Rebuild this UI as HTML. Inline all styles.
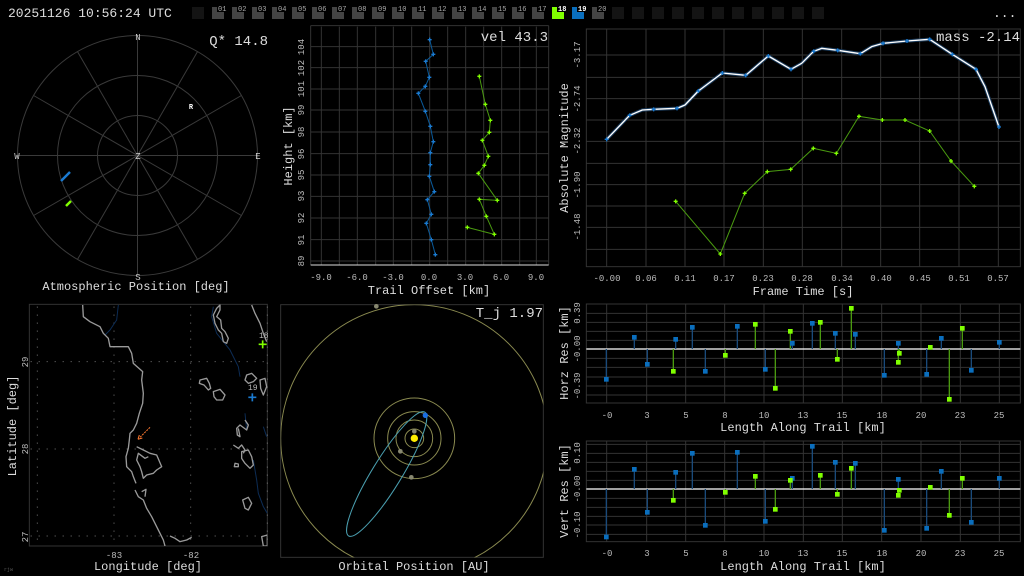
<!DOCTYPE html>
<html><head><meta charset="utf-8"><style>
html,body{margin:0;padding:0;background:#000;width:1024px;height:576px;overflow:hidden}
svg{display:block}
text{font-family:"Liberation Mono",monospace}
</style></head><body>
<svg width="1024" height="576" viewBox="0 0 1024 576" xmlns="http://www.w3.org/2000/svg">
<defs>
<path id="pb" d="M-6 0h12M0-6v12" stroke="#1a7ad0" stroke-width="4"/>
<path id="pg" d="M-6 0h12M0-6v12" stroke="#80ff00" stroke-width="4"/>
<clipPath id="oc"><rect x="2" y="14" width="788" height="758"/></clipPath>
<clipPath id="mc"><rect x="88" y="13" width="714" height="725"/></clipPath>
</defs>
<rect width="1024" height="576" fill="#000"/>
<!-- header -->
<text x="8" y="17" font-size="13" fill="#ddd">20251126 10:56:24 UTC</text>
<g>
<rect x="192" y="7" width="12" height="12" fill="#141414"/>
<g fill="#444"><rect x="212" y="7" width="12" height="12"/><rect x="232" y="7" width="12" height="12"/><rect x="252" y="7" width="12" height="12"/><rect x="272" y="7" width="12" height="12"/><rect x="292" y="7" width="12" height="12"/><rect x="312" y="7" width="12" height="12"/><rect x="332" y="7" width="12" height="12"/><rect x="352" y="7" width="12" height="12"/><rect x="372" y="7" width="12" height="12"/><rect x="392" y="7" width="12" height="12"/><rect x="412" y="7" width="12" height="12"/><rect x="432" y="7" width="12" height="12"/><rect x="452" y="7" width="12" height="12"/><rect x="472" y="7" width="12" height="12"/><rect x="492" y="7" width="12" height="12"/><rect x="512" y="7" width="12" height="12"/><rect x="532" y="7" width="12" height="12"/><rect x="592" y="7" width="12" height="12"/></g>
<rect x="552" y="7" width="12" height="12" fill="#80ff00"/>
<rect x="572" y="7" width="12" height="12" fill="#0a6ebd"/>
<g fill="#141414"><rect x="612" y="7" width="12" height="12"/><rect x="632" y="7" width="12" height="12"/><rect x="652" y="7" width="12" height="12"/><rect x="672" y="7" width="12" height="12"/><rect x="692" y="7" width="12" height="12"/><rect x="712" y="7" width="12" height="12"/><rect x="732" y="7" width="12" height="12"/><rect x="752" y="7" width="12" height="12"/><rect x="772" y="7" width="12" height="12"/><rect x="792" y="7" width="12" height="12"/><rect x="812" y="7" width="12" height="12"/></g>
<g fill="#000"><rect x="217" y="4" width="10" height="8"/><rect x="237" y="4" width="10" height="8"/><rect x="257" y="4" width="10" height="8"/><rect x="277" y="4" width="10" height="8"/><rect x="297" y="4" width="10" height="8"/><rect x="317" y="4" width="10" height="8"/><rect x="337" y="4" width="10" height="8"/><rect x="357" y="4" width="10" height="8"/><rect x="377" y="4" width="10" height="8"/><rect x="397" y="4" width="10" height="8"/><rect x="417" y="4" width="10" height="8"/><rect x="437" y="4" width="10" height="8"/><rect x="457" y="4" width="10" height="8"/><rect x="477" y="4" width="10" height="8"/><rect x="497" y="4" width="10" height="8"/><rect x="517" y="4" width="10" height="8"/><rect x="537" y="4" width="10" height="8"/><rect x="557" y="4" width="10" height="8"/><rect x="577" y="4" width="10" height="8"/><rect x="597" y="4" width="10" height="8"/></g>
<g font-size="7" fill="#aaa"><text x="218" y="11">01</text><text x="238" y="11">02</text><text x="258" y="11">03</text><text x="278" y="11">04</text><text x="298" y="11">05</text><text x="318" y="11">06</text><text x="338" y="11">07</text><text x="358" y="11">08</text><text x="378" y="11">09</text><text x="398" y="11">10</text><text x="418" y="11">11</text><text x="438" y="11">12</text><text x="458" y="11">13</text><text x="478" y="11">14</text><text x="498" y="11">15</text><text x="518" y="11">16</text><text x="538" y="11">17</text><text x="558" y="11" fill="#fff" font-weight="bold">18</text><text x="578" y="11" fill="#fff" font-weight="bold">19</text><text x="598" y="11">20</text></g>
<text x="993" y="17" font-size="13" fill="#ddd">...</text>
</g>

<!-- polar -->
<g stroke="#3a3a3a" stroke-width="1" fill="none">
<circle cx="137.5" cy="155.5" r="40"/><circle cx="137.5" cy="155.5" r="80"/><circle cx="137.5" cy="155.5" r="120"/>
<path d="M137.5 35.5V275.5M17.5 155.5H257.5M197.5 51.6L77.5 259.4M241.4 95.5L33.6 215.5M241.4 215.5L33.6 95.5M197.5 259.4L77.5 51.6"/>
</g>
<g font-size="9" fill="#ccc" text-anchor="middle"><text x="138" y="40">N</text><text x="138" y="280">S</text><text x="17" y="159">W</text><text x="258" y="159">E</text><text x="138" y="159">Z</text><text x="191" y="109" font-size="7" fill="#fff" font-weight="bold">R</text></g>
<path d="M61 181L70 172" stroke="#1a7ad0" stroke-width="2.5"/>
<path d="M66 206L71 201" stroke="#80ff00" stroke-width="2.5"/>
<text x="268" y="45" font-size="14" fill="#ddd" text-anchor="end">Q* 14.8</text>
<text x="136" y="290" font-size="12" fill="#ddd" text-anchor="middle">Atmospheric Position [deg]</text>

<!-- height plot (zoom coords) -->
<g transform="translate(280,20) scale(0.33333)">
<g stroke="#333" stroke-width="3">
<path d="M124 20V735M178 20V735M232 20V735M287 20V735M340 20V735M395 20V735M449 20V735M503 20V735M557 20V735M611 20V735M665 20V735M719 20V735M769 20V735"/>
<path d="M92 17H806M92 80H806M92 143H806M92 207H806M92 270H806M92 336H806M92 401H806M92 465H806M92 529H806M92 594H806M92 659H806M92 723H806"/>
<path d="M92 17V735M806 17V735"/>
</g>
<path d="M92 735H806" stroke="#ddd" stroke-width="3"/>
<polyline fill="none" stroke="#0a5a9a" stroke-width="3" points="449,59 460,103 437,124 448,172 436,199 415,220 436,274 451,319 460,365 451,398 451,434 448,469 463,515 442,539 454,583 439,610 454,659 466,704"/>
<g><use href="#pb" x="449" y="59"/><use href="#pb" x="460" y="103"/><use href="#pb" x="437" y="124"/><use href="#pb" x="448" y="172"/><use href="#pb" x="436" y="199"/><use href="#pb" x="415" y="220"/><use href="#pb" x="436" y="274"/><use href="#pb" x="451" y="319"/><use href="#pb" x="460" y="365"/><use href="#pb" x="451" y="398"/><use href="#pb" x="451" y="434"/><use href="#pb" x="448" y="469"/><use href="#pb" x="463" y="515"/><use href="#pb" x="442" y="539"/><use href="#pb" x="454" y="583"/><use href="#pb" x="439" y="610"/><use href="#pb" x="454" y="659"/><use href="#pb" x="466" y="704"/></g>
<polyline fill="none" stroke="#4a9a10" stroke-width="3" points="598,169 616,253 631,301 628,337 607,361 625,409 613,436 595,460 652,541 598,538 619,589 643,643 562,622"/>
<g><use href="#pg" x="598" y="169"/><use href="#pg" x="616" y="253"/><use href="#pg" x="631" y="301"/><use href="#pg" x="628" y="337"/><use href="#pg" x="607" y="361"/><use href="#pg" x="625" y="409"/><use href="#pg" x="613" y="436"/><use href="#pg" x="595" y="460"/><use href="#pg" x="652" y="541"/><use href="#pg" x="598" y="538"/><use href="#pg" x="619" y="589"/><use href="#pg" x="643" y="643"/><use href="#pg" x="562" y="622"/></g>
</g>
<g font-size="9" fill="#bbb" text-anchor="middle">
<text x="321" y="280">-9.0</text><text x="357" y="280">-6.0</text><text x="393" y="280">-3.0</text><text x="429" y="280">0.0</text><text x="465" y="280">3.0</text><text x="501" y="280">6.0</text><text x="536" y="280">9.0</text>
</g>
<g font-size="9" fill="#bbb" text-anchor="middle">
<text transform="translate(304,47) rotate(-90)">104</text><text transform="translate(304,68) rotate(-90)">102</text><text transform="translate(304,89) rotate(-90)">101</text><text transform="translate(304,110) rotate(-90)">99</text><text transform="translate(304,132) rotate(-90)">98</text><text transform="translate(304,154) rotate(-90)">96</text><text transform="translate(304,175) rotate(-90)">95</text><text transform="translate(304,196) rotate(-90)">93</text><text transform="translate(304,218) rotate(-90)">92</text><text transform="translate(304,240) rotate(-90)">91</text><text transform="translate(304,261) rotate(-90)">89</text>
</g>
<text x="429" y="294" font-size="12" fill="#ddd" text-anchor="middle">Trail Offset [km]</text>
<text transform="translate(292,146) rotate(-90)" font-size="12" fill="#ddd" text-anchor="middle">Height [km]</text>
<text x="548" y="41" font-size="14" fill="#ddd" text-anchor="end">vel 43.3</text>

<!-- magnitude -->
<g transform="translate(555,20) scale(0.33333)">
<g stroke="#333" stroke-width="3">
<path d="M155 27V740M273 27V740M390 27V740M507 27V740M625 27V740M742 27V740M860 27V740M977 27V740M1094 27V740M1212 27V740M1330 27V740"/>
<path d="M94 105H1396M94 172H1396M94 236H1396M94 300H1396M94 364H1396M94 430H1396M94 494H1396M94 558H1396M94 622H1396M94 688H1396"/>
<rect x="94" y="27" width="1302" height="713" fill="none"/>
</g>
<polyline fill="none" stroke="#1a3a5a" stroke-width="10" stroke-linejoin="round" points="155,358 224,286 262,270 296,268 366,265 390,255 430,213 502,159 572,166 640,108 708,148 740,130 776,94 800,85 848,91 916,101 950,80 984,70 1056,63 1124,58 1192,103 1263,148 1290,200 1332,321"/>
<polyline fill="none" stroke="#fff" stroke-width="4" stroke-linejoin="round" points="155,358 224,286 262,270 296,268 366,265 390,255 430,213 502,159 572,166 640,108 708,148 740,130 776,94 800,85 848,91 916,101 950,80 984,70 1056,63 1124,58 1192,103 1263,148 1290,200 1332,321"/>
<g><use href="#pb" x="155" y="358"/><use href="#pb" x="224" y="286"/><use href="#pb" x="296" y="268"/><use href="#pb" x="366" y="265"/><use href="#pb" x="430" y="213"/><use href="#pb" x="502" y="159"/><use href="#pb" x="572" y="166"/><use href="#pb" x="640" y="108"/><use href="#pb" x="708" y="148"/><use href="#pb" x="776" y="94"/><use href="#pb" x="848" y="91"/><use href="#pb" x="916" y="101"/><use href="#pb" x="984" y="70"/><use href="#pb" x="1056" y="63"/><use href="#pb" x="1124" y="58"/><use href="#pb" x="1192" y="103"/><use href="#pb" x="1263" y="148"/><use href="#pb" x="1332" y="321"/></g>
<polyline fill="none" stroke="#4a9a10" stroke-width="3" points="362,544 496,702 569,520 637,455 707,448 775,385 844,400 912,289 982,300 1050,300 1124,333 1188,423 1258,499"/>
<g><use href="#pg" x="362" y="544"/><use href="#pg" x="496" y="702"/><use href="#pg" x="569" y="520"/><use href="#pg" x="637" y="455"/><use href="#pg" x="707" y="448"/><use href="#pg" x="775" y="385"/><use href="#pg" x="844" y="400"/><use href="#pg" x="912" y="289"/><use href="#pg" x="982" y="300"/><use href="#pg" x="1050" y="300"/><use href="#pg" x="1124" y="333"/><use href="#pg" x="1188" y="423"/><use href="#pg" x="1258" y="499"/></g>
</g>
<g font-size="9" fill="#bbb" text-anchor="middle">
<text x="607" y="281">-0.00</text><text x="646" y="281">0.06</text><text x="685" y="281">0.11</text><text x="724" y="281">0.17</text><text x="763" y="281">0.23</text><text x="802" y="281">0.28</text><text x="842" y="281">0.34</text><text x="881" y="281">0.40</text><text x="920" y="281">0.45</text><text x="959" y="281">0.51</text><text x="998" y="281">0.57</text>
<text transform="translate(580,55) rotate(-90)">-3.17</text><text transform="translate(580,99) rotate(-90)">-2.74</text><text transform="translate(580,141) rotate(-90)">-2.32</text><text transform="translate(580,185) rotate(-90)">-1.90</text><text transform="translate(580,227) rotate(-90)">-1.48</text>
</g>
<text x="803" y="295" font-size="12" fill="#ddd" text-anchor="middle">Frame Time [s]</text>
<text transform="translate(568,148) rotate(-90)" font-size="12" fill="#ddd" text-anchor="middle">Absolute Magnitude</text>
<text x="1020" y="41" font-size="14" fill="#ddd" text-anchor="end">mass -2.14</text>

<!-- horz res -->
<g transform="translate(555,295) scale(0.33333)">
<g stroke="#333" stroke-width="3">
<path d="M155 27V324M275 27V324M392 27V324M509 27V324M627 27V324M745 27V324M862 27V324M980 27V324M1098 27V324M1216 27V324M1333 27V324"/>
<path d="M94 55H1396M94 82H1396M94 109H1396M94 136H1396M94 190H1396M94 217H1396M94 246H1396M94 273H1396M94 300H1396"/>
<rect x="94" y="27" width="1302" height="297" fill="none"/>
</g>
<path d="M94 162H1396" stroke="#fff" stroke-width="4"/>
<g stroke="#1a4a7a" stroke-width="4"><path d="M154 162V253M238 162V127M277 162V208M362 162V133M412 162V97M451 162V229M547 162V94M631 162V223M712 162V145M772 162V85M841 162V115M901 162V118M988 162V241M1030 162V145M1115 162V238M1159 162V130M1249 162V226M1333 162V142"/></g>
<g stroke="#4a9a10" stroke-width="4"><path d="M355 162V229M511 162V181M601 162V88M661 162V280M706 162V109M796 162V82M847 162V193M889 162V40M1033 162V175M1030 162V202M1126 162V157M1183 162V313M1222 162V100"/></g>
<g fill="#0a6ebd"><rect x="147" y="246" width="14" height="14"/><rect x="231" y="120" width="14" height="14"/><rect x="270" y="201" width="14" height="14"/><rect x="355" y="126" width="14" height="14"/><rect x="405" y="90" width="14" height="14"/><rect x="444" y="222" width="14" height="14"/><rect x="540" y="87" width="14" height="14"/><rect x="624" y="216" width="14" height="14"/><rect x="705" y="138" width="14" height="14"/><rect x="765" y="78" width="14" height="14"/><rect x="834" y="108" width="14" height="14"/><rect x="894" y="111" width="14" height="14"/><rect x="981" y="234" width="14" height="14"/><rect x="1023" y="138" width="14" height="14"/><rect x="1108" y="231" width="14" height="14"/><rect x="1152" y="123" width="14" height="14"/><rect x="1242" y="219" width="14" height="14"/><rect x="1326" y="135" width="14" height="14"/></g>
<g fill="#80ff00"><rect x="348" y="222" width="14" height="14"/><rect x="504" y="174" width="14" height="14"/><rect x="594" y="81" width="14" height="14"/><rect x="654" y="273" width="14" height="14"/><rect x="699" y="102" width="14" height="14"/><rect x="789" y="75" width="14" height="14"/><rect x="840" y="186" width="14" height="14"/><rect x="882" y="33" width="14" height="14"/><rect x="1026" y="168" width="14" height="14"/><rect x="1023" y="195" width="14" height="14"/><rect x="1119" y="150" width="14" height="14"/><rect x="1176" y="306" width="14" height="14"/><rect x="1215" y="93" width="14" height="14"/></g>
</g>
<g font-size="9" fill="#bbb" text-anchor="middle">
<text x="607" y="418">-0</text><text x="647" y="418">3</text><text x="686" y="418">5</text><text x="725" y="418">8</text><text x="764" y="418">10</text><text x="803" y="418">13</text><text x="842" y="418">15</text><text x="882" y="418">18</text><text x="921" y="418">20</text><text x="960" y="418">23</text><text x="999" y="418">25</text>
<text transform="translate(580,313) rotate(-90)">0.39</text><text transform="translate(580,349) rotate(-90)">-0.00</text><text transform="translate(580,386) rotate(-90)">-0.39</text>
</g>
<text x="803" y="431" font-size="12" fill="#ddd" text-anchor="middle">Length Along Trail [km]</text>
<text transform="translate(568,353) rotate(-90)" font-size="12" fill="#ddd" text-anchor="middle">Horz Res [km]</text>

<!-- vert res -->
<g transform="translate(555,435) scale(0.33333)">
<g stroke="#333" stroke-width="3">
<path d="M155 18V320M275 18V320M392 18V320M509 18V320M627 18V320M745 18V320M862 18V320M980 18V320M1098 18V320M1216 18V320M1333 18V320"/>
<path d="M94 28H1396M94 55H1396M94 82H1396M94 109H1396M94 136H1396M94 190H1396M94 217H1396M94 244H1396M94 270H1396M94 298H1396"/>
<rect x="94" y="18" width="1302" height="302" fill="none"/>
</g>
<path d="M94 162H1396" stroke="#fff" stroke-width="4"/>
<g stroke="#1a4a7a" stroke-width="4"><path d="M154 162V306M238 162V103M277 162V232M362 162V112M412 162V55M451 162V271M547 162V52M631 162V259M712 162V130M772 162V34M841 162V82M901 162V85M988 162V286M1030 162V133M1115 162V280M1159 162V109M1249 162V262M1333 162V130"/></g>
<g stroke="#4a9a10" stroke-width="4"><path d="M355 162V196M511 162V172M601 162V124M661 162V223M706 162V136M796 162V121M847 162V178M889 162V100M1033 162V166M1030 162V181M1126 162V157M1183 162V241M1222 162V130"/></g>
<g fill="#0a6ebd"><rect x="147" y="299" width="14" height="14"/><rect x="231" y="96" width="14" height="14"/><rect x="270" y="225" width="14" height="14"/><rect x="355" y="105" width="14" height="14"/><rect x="405" y="48" width="14" height="14"/><rect x="444" y="264" width="14" height="14"/><rect x="540" y="45" width="14" height="14"/><rect x="624" y="252" width="14" height="14"/><rect x="705" y="123" width="14" height="14"/><rect x="765" y="27" width="14" height="14"/><rect x="834" y="75" width="14" height="14"/><rect x="894" y="78" width="14" height="14"/><rect x="981" y="279" width="14" height="14"/><rect x="1023" y="126" width="14" height="14"/><rect x="1108" y="273" width="14" height="14"/><rect x="1152" y="102" width="14" height="14"/><rect x="1242" y="255" width="14" height="14"/><rect x="1326" y="123" width="14" height="14"/></g>
<g fill="#80ff00"><rect x="348" y="189" width="14" height="14"/><rect x="504" y="165" width="14" height="14"/><rect x="594" y="117" width="14" height="14"/><rect x="654" y="216" width="14" height="14"/><rect x="699" y="129" width="14" height="14"/><rect x="789" y="114" width="14" height="14"/><rect x="840" y="171" width="14" height="14"/><rect x="882" y="93" width="14" height="14"/><rect x="1026" y="159" width="14" height="14"/><rect x="1023" y="174" width="14" height="14"/><rect x="1119" y="150" width="14" height="14"/><rect x="1176" y="234" width="14" height="14"/><rect x="1215" y="123" width="14" height="14"/></g>
</g>
<g font-size="9" fill="#bbb" text-anchor="middle">
<text x="607" y="556">-0</text><text x="647" y="556">3</text><text x="686" y="556">5</text><text x="725" y="556">8</text><text x="764" y="556">10</text><text x="803" y="556">13</text><text x="842" y="556">15</text><text x="882" y="556">18</text><text x="921" y="556">20</text><text x="960" y="556">23</text><text x="999" y="556">25</text>
<text transform="translate(580,453) rotate(-90)">0.10</text><text transform="translate(580,489) rotate(-90)">-0.00</text><text transform="translate(580,525) rotate(-90)">-0.10</text>
</g>
<text x="803" y="570" font-size="12" fill="#ddd" text-anchor="middle">Length Along Trail [km]</text>
<text transform="translate(568,491) rotate(-90)" font-size="12" fill="#ddd" text-anchor="middle">Vert Res [km]</text>

<!-- map -->
<g transform="translate(0,300) scale(0.33333)">
<rect x="88" y="13" width="714" height="725" fill="none" stroke="#333" stroke-width="3"/>
<g stroke="#777" stroke-width="3" stroke-dasharray="3 21" fill="none">
<path d="M112 20V738M342 20V738M572 20V738M802 20V738M92 185H802M92 447H802M92 708H802"/>
</g>
<g clip-path="url(#mc)" fill="none" stroke-linejoin="round">
<g stroke="#0c2c55" stroke-width="3">
<path d="M355 15L350 60L330 90L315 105"/>
<path d="M640 20L635 50L650 100L690 150L715 200L720 230"/>
<path d="M735 340L740 390"/>
<path d="M760 480L770 540L775 580L790 620L802 640"/>
<path d="M790 380L800 410"/>
</g>
<g stroke="#9a9a9a" stroke-width="4">
<path d="M248 15L250 50L270 65L300 80L310 100L325 115L330 140L385 140L395 160L400 190L428 215L425 240L430 280L428 310L418 340L410 370L400 390L390 400L388 420L385 445L378 470L380 500L395 515L400 530L408 550"/>
<path d="M410 440L430 450L450 460L470 465L485 500L470 510L460 520L440 525L430 535L425 515L420 500L410 480L415 460L435 475L445 470"/>
<path d="M405 570L415 590L430 600L440 625L455 650L470 680L480 700L490 720L495 738"/>
<path d="M425 575L438 568L435 590"/>
<path d="M510 708L525 715L540 725L560 720L575 712"/>
<path d="M755 15L765 40L780 70L790 100L800 125"/>
<path d="M660 15L650 25L640 45L645 70L655 90L665 100L670 125L680 130L685 115L675 95L665 85L662 60L650 50L660 30Z"/>
<path d="M600 240L620 235L628 250L632 265L625 270L612 255L598 250Z"/>
<path d="M640 275L660 268L675 285L668 300L650 300L642 290Z"/>
<path d="M740 225L755 220L770 235L760 245L745 250L735 240Z"/>
<path d="M780 240L795 235L800 260L790 285L782 265Z"/>
<path d="M735 360L745 375L740 390L720 375L710 385L712 405L720 410L715 385"/>
<path d="M700 435L715 445L725 435L735 450L730 460"/>
<path d="M725 455L745 450L755 470L760 495L750 505L735 490L725 475Z"/>
<path d="M705 490L715 492L715 500L703 500Z"/>
<path d="M728 600L745 592L755 610L745 630L735 625Z"/>
<path d="M785 710L802 705L802 738L790 738Z"/>
</g>
</g>
<path d="M450 382L418 414" stroke="#ff7a30" stroke-width="3" stroke-dasharray="6 3"/>
<path d="M414 418L418 405M414 418L427 414" stroke="#ff7a30" stroke-width="3"/>
<path d="M776 133H800M788 121V145" stroke="#80ff00" stroke-width="5"/>
<path d="M745 292H769M757 280V304" stroke="#1a7ad0" stroke-width="5"/>
</g>
<text x="259" y="338" font-size="8" fill="#bbb">18</text>
<text x="248" y="390" font-size="8" fill="#bbb">19</text>
<g font-size="9" fill="#bbb" text-anchor="middle">
<text x="114" y="558">-83</text><text x="191" y="558">-82</text>
<text transform="translate(28,362) rotate(-90)">29</text><text transform="translate(28,449) rotate(-90)">28</text><text transform="translate(28,537) rotate(-90)">27</text>
</g>
<text x="148" y="570" font-size="12" fill="#ddd" text-anchor="middle">Longitude [deg]</text>
<text transform="translate(16,426) rotate(-90)" font-size="12" fill="#ddd" text-anchor="middle">Latitude [deg]</text>
<text x="4" y="571" font-size="5" fill="#555">rjw</text>

<!-- orbit -->
<g transform="translate(280,300) scale(0.33333)">
<rect x="2" y="14" width="788" height="758" fill="none" stroke="#333" stroke-width="3"/>
<g clip-path="url(#oc)" fill="none" stroke="#8a8a50" stroke-width="3">
<circle cx="403" cy="415" r="401"/>
<circle cx="403" cy="415" r="28"/>
<circle cx="403" cy="415" r="55"/>
<circle cx="403" cy="415" r="80"/>
<circle cx="403" cy="415" r="121"/>
</g>
<ellipse cx="320" cy="522" rx="218" ry="44" transform="rotate(-58.4 320 522)" fill="none" stroke="#4a9fb0" stroke-width="3"/>
<g fill="#888870"><circle cx="289" cy="19" r="7"/><circle cx="403" cy="394" r="7"/><circle cx="361" cy="454" r="7"/><circle cx="394" cy="532" r="7"/></g>
<circle cx="403" cy="415" r="11" fill="#ffee00"/>
<circle cx="436" cy="346" r="8" fill="#1a6ee0"/>
</g>
<text x="543" y="317" font-size="14" fill="#ddd" text-anchor="end">T_j 1.97</text>
<text x="414" y="570" font-size="12" fill="#ddd" text-anchor="middle">Orbital Position [AU]</text>
</svg>
</body></html>
